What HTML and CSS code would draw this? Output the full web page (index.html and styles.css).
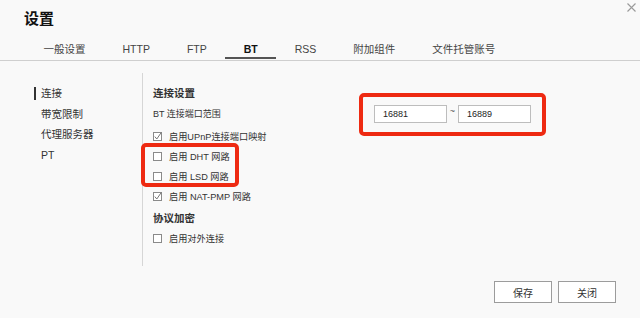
FILE: index.html
```html
<!DOCTYPE html>
<html lang="zh-CN">
<head>
  <meta charset="UTF-8">
  <title>设置</title>
  <link rel="stylesheet" href="styles.css">
</head>
<body>

<div class="dialog">
  <div class="header">
    <h1>设置</h1>
    <span class="close">
      <svg width="9" height="9" viewBox="0 0 9 9"><path d="M0.5 0.5 L8.5 8.5 M8.5 0.5 L0.5 8.5" stroke="#9a9a9a" stroke-width="1.1" fill="none"/></svg>
    </span>
  </div>

  <div class="tabs">
    <span class="tab">一般设置</span>
    <span class="tab">HTTP</span>
    <span class="tab">FTP</span>
    <span class="tab active">BT</span>
    <span class="tab">RSS</span>
    <span class="tab">附加组件</span>
    <span class="tab">文件托管账号</span>
  </div>

  <div class="main">
    <div class="nav">
      <div class="nav-item active">连接</div>
      <div class="nav-item">带宽限制</div>
      <div class="nav-item">代理服务器</div>
      <div class="nav-item">PT</div>
    </div>

    <div class="content">
      <div class="section-title">连接设置</div>
      <div class="port-row">
        <span class="port-label">BT 连接端口范围</span>
        <div class="port-inputs mark">
          <input class="field" type="text" value="16881">
          <span class="tilde">~</span>
          <input class="field" type="text" value="16889">
        </div>
      </div>

      <div class="check-row first">
        <span class="cb checked"><svg width="9" height="9" viewBox="0 0 9 9"><path d="M1.8 4.6 L3.8 7 L8.2 0.6" stroke="#777" stroke-width="1" fill="none"/></svg></span>
        <span>启用UPnP连接端口映射</span>
      </div>
      <div class="check-group mark">
        <div class="check-row">
          <span class="cb"></span>
          <span>启用 DHT 网路</span>
        </div>
        <div class="check-row">
          <span class="cb"></span>
          <span>启用 LSD 网路</span>
        </div>
      </div>
      <div class="check-row">
        <span class="cb checked"><svg width="9" height="9" viewBox="0 0 9 9"><path d="M1.8 4.6 L3.8 7 L8.2 0.6" stroke="#777" stroke-width="1" fill="none"/></svg></span>
        <span>启用 NAT-PMP 网路</span>
      </div>

      <div class="section-title second">协议加密</div>
      <div class="check-row">
        <span class="cb"></span>
        <span>启用对外连接</span>
      </div>
    </div>
  </div>

  <div class="footer">
    <button class="btn">保存</button>
    <button class="btn">关闭</button>
  </div>
</div>

</body>
</html>
```

FILE: styles.css
```css
body {
  margin: 0;
  background-color: #f9f9f9;
  color: #222;
  font-family: "Liberation Sans", "Noto Sans CJK SC", sans-serif;
}
.dialog {
  position: relative;
  width: 640px;
  height: 318px;
}
.header {
  height: 38px;
  padding-left: 24px;
}
.header h1 {
  margin: 0;
  padding-top: 9px;
  font-size: 15px;
  line-height: 20px;
  font-weight: bold;
  color: #111;
}
.close {
  position: absolute;
  top: 3px;
  right: 4px;
  width: 9px;
  height: 9px;
}
.close svg {
  display: block;
}
.tabs {
  display: flex;
  padding-left: 25px;
  padding-bottom: 1px;
  border-bottom: 1px solid #cfcfcf;
}
.tab {
  padding: 3px 18.5px 0;
  font-size: 10.5px;
  line-height: 16px;
  color: #444;
  border-bottom: 2px solid transparent;
}
.tab.active {
  font-weight: bold;
  color: #111;
  border-bottom-color: #555;
}
.main {
  display: flex;
  margin-top: 12px;
  height: 193px;
}
.nav {
  width: 143px;
  border-right: 1px solid #d6d6d6;
  padding-top: 10px;
  box-sizing: border-box;
}
.nav-item {
  position: relative;
  margin-left: 41px;
  font-size: 10.5px;
  line-height: 20.5px;
  color: #333;
}
.nav-item.active::before {
  content: "";
  position: absolute;
  left: -7px;
  top: 4px;
  width: 2px;
  height: 13px;
  background-color: #333;
}
.content {
  padding: 10px 0 0 10px;
}
.section-title {
  font-size: 10.5px;
  font-weight: bold;
  line-height: 20px;
  color: #333;
}
.section-title.second {
  margin-top: 2px;
}
.port-row {
  display: flex;
  align-items: center;
  height: 21px;
  font-size: 9px;
  color: #333;
}
.port-label {
  width: 221px;
}
.port-inputs {
  display: flex;
  align-items: center;
}
.field {
  width: 73px;
  height: 18px;
  box-sizing: border-box;
  border: 1px solid #bdbdbd;
  background-color: #fff;
  padding: 0 0 0 8px;
  margin: 0;
  font-family: "Liberation Sans", sans-serif;
  font-size: 9px;
  color: #222;
  outline: none;
}
.tilde {
  width: 11px;
  text-align: center;
  font-size: 9px;
  margin-top: -6px;
  color: #555;
}
.check-row {
  display: flex;
  align-items: center;
  height: 20px;
  font-size: 9.2px;
  color: #333;
}
.check-row.first {
  margin-top: 2px;
}
.cb {
  width: 9px;
  height: 9px;
  box-sizing: border-box;
  border: 1px solid #8a8a8a;
  background-color: #fff;
  margin-right: 7px;
  position: relative;
}
.cb svg {
  position: absolute;
  left: -1px;
  top: -1px;
}
.mark {
  position: relative;
}
.mark::after {
  content: "";
  position: absolute;
  border: 4px solid #ee2a12;
  border-radius: 5px;
}
.port-inputs.mark::after {
  left: -15px;
  right: -15px;
  top: -12px;
  bottom: -13px;
}
.check-group.mark::after {
  left: -12px;
  top: -3px;
  bottom: -1px;
  width: 90px;
}
.footer {
  display: flex;
  justify-content: flex-end;
  gap: 6px;
  margin-top: 15px;
  padding-right: 24px;
}
.btn {
  width: 58px;
  height: 22px;
  background-color: #fff;
  border: 1px solid #9c9c9c;
  font-family: "Liberation Sans", "Noto Sans CJK SC", sans-serif;
  font-size: 10px;
  color: #333;
  padding: 0;
  cursor: pointer;
}
```
